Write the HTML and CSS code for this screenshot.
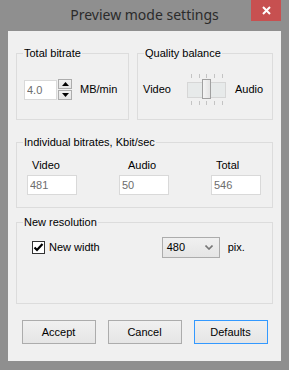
FILE: index.html
```html
<!DOCTYPE html>
<html lang="en">
<head>
    <meta charset="UTF-8">
    <title>Preview mode settings</title>
    <link rel="stylesheet" href="styles.css">
</head>
<body>

<div class="window">
    <!-- Title bar -->
    <div class="titlebar">
        <span class="title">Preview mode settings</span>
        <div class="close-btn">
            <svg width="9" height="9" viewBox="0 0 9 9">
                <path d="M1 1 L8 8 M8 1 L1 8" stroke="#fff" stroke-width="2"/>
            </svg>
        </div>
    </div>

    <div class="client">
        <div class="row">
            <!-- Total bitrate -->
            <fieldset class="group group-bitrate">
                <legend>Total bitrate</legend>
                <div class="spin-row">
                    <input class="field field-spin" type="text" value="4.0" disabled>
                    <div class="spin">
                        <div class="spin-btn">
                            <svg width="7" height="4" viewBox="0 0 7 4"><path d="M0 4 L3.5 0 L7 4 Z" fill="#000"/></svg>
                        </div>
                        <div class="spin-btn">
                            <svg width="7" height="4" viewBox="0 0 7 4"><path d="M0 0 L3.5 4 L7 0 Z" fill="#000"/></svg>
                        </div>
                    </div>
                    <span class="unit">MB/min</span>
                </div>
            </fieldset>

            <!-- Quality balance -->
            <fieldset class="group group-balance">
                <legend>Quality balance</legend>
                <div class="balance-row">
                    <span>Video</span>
                    <div class="trackbar">
                        <div class="ticks">
                            <i></i><i></i><i></i><i></i><i></i>
                        </div>
                        <div class="track"></div>
                        <div class="ticks">
                            <i></i><i></i><i></i><i></i><i></i>
                        </div>
                        <div class="thumb"></div>
                    </div>
                    <span class="audio-label">Audio</span>
                </div>
            </fieldset>
        </div>

        <!-- Individual bitrates -->
        <fieldset class="group group-rates">
            <legend>Individual bitrates, Kbit/sec</legend>
            <div class="rates">
                <div class="rate">
                    <label>Video</label>
                    <input class="field field-rate" type="text" value="481" disabled>
                </div>
                <div class="rate rate-audio">
                    <label>Audio</label>
                    <input class="field field-rate" type="text" value="50" disabled>
                </div>
                <div class="rate">
                    <label>Total</label>
                    <input class="field field-rate" type="text" value="546" disabled>
                </div>
            </div>
        </fieldset>

        <!-- New resolution -->
        <fieldset class="group group-resolution">
            <legend>New resolution</legend>
            <div class="res-row">
                <span class="checkbox">
                    <svg width="11" height="11" viewBox="0 0 11 11">
                        <path d="M1.5 5.5 L4 8 L9.5 2" stroke="#000" stroke-width="2.2" fill="none"/>
                    </svg>
                </span>
                <span class="check-label">New width</span>
                <div class="combo">
                    <span>480</span>
                    <svg width="8" height="5" viewBox="0 0 8 5">
                        <path d="M0.5 0.5 L4 4 L7.5 0.5" stroke="#777" stroke-width="1.6" fill="none"/>
                    </svg>
                </div>
                <span class="unit">pix.</span>
            </div>
        </fieldset>

        <!-- Buttons -->
        <div class="buttons">
            <button type="button">Accept</button>
            <button type="button">Cancel</button>
            <button type="button" class="default">Defaults</button>
        </div>
    </div>
</div>

</body>
</html>
```
FILE: styles.css
```css
/* Basic Reset */
* {
    box-sizing: border-box;
    margin: 0;
    padding: 0;
}

body {
    font-family: "Liberation Sans", Arial, sans-serif;
    font-size: 11px;
    line-height: 13px;
    color: #000;
}

/* Window frame */
.window {
    width: 289px;
    height: 370px;
    background-color: #8f8f8f;
    display: flex;
    flex-direction: column;
}

.titlebar {
    height: 31px;
    position: relative;
    text-align: center;
}

.title {
    display: block;
    padding-top: 5px;
    font-family: "Noto Sans", sans-serif;
    font-size: 14px;
    line-height: 20px;
    color: #2b2b2b;
}

.close-btn {
    position: absolute;
    top: 0;
    right: 8px;
    width: 30px;
    height: 21px;
    background-color: #c75050;
    display: flex;
    align-items: center;
    justify-content: center;
}

/* Client area */
.client {
    flex: 1;
    margin: 0 8px 9px;
    background-color: #f0f0f0;
    padding: 16px 8px 0;
}

.row {
    display: flex;
    gap: 8px;
}

/* Group boxes */
.group {
    border: 1px solid #dcdcdc;
    padding: 0 6px;
    min-width: 0;
}

.group legend {
    padding: 0 1px;
    line-height: 13px;
}

.group-bitrate {
    width: 113px;
    height: 73px;
}

.group-balance {
    width: 136px;
    height: 73px;
}

.group-rates {
    margin-top: 16px;
    height: 72px;
}

.group-resolution {
    margin-top: 8px;
    height: 88px;
}

/* Text fields */
.field {
    font-family: inherit;
    font-size: 11px;
    height: 20px;
    border: 1px solid #d9d9d9;
    background-color: #fff;
    color: #6d6d6d;
    padding: 0 2px;
    outline: none;
}

/* Total bitrate */
.spin-row {
    display: flex;
    align-items: center;
    margin-top: 19px;
    margin-left: 1px;
}

.field-spin {
    width: 33px;
}

.spin {
    display: flex;
    flex-direction: column;
    gap: 1px;
    margin-left: 1px;
}

.spin-btn {
    width: 14px;
    height: 10px;
    border: 1px solid #acacac;
    background: linear-gradient(#f0f0f0, #e5e5e5);
    display: flex;
    align-items: center;
    justify-content: center;
}

.unit {
    margin-left: 8px;
}

/* Quality balance */
.balance-row {
    display: flex;
    align-items: center;
    margin-top: 14px;
    margin-left: -1px;
}

.trackbar {
    position: relative;
    width: 39px;
    height: 31px;
    margin-left: 16px;
    display: flex;
    flex-direction: column;
    justify-content: space-between;
}

.ticks {
    display: flex;
    justify-content: space-between;
    padding: 0 3px 0 4px;
    height: 4px;
}

.ticks i {
    width: 1px;
    height: 4px;
    background-color: #c4c4c4;
}

.track {
    height: 16px;
    border: 1px solid #d6d6d6;
    background-color: #e7eaea;
}

.thumb {
    position: absolute;
    left: 15px;
    top: 5px;
    width: 9px;
    height: 20px;
    border: 1px solid #a0a0a0;
    background: linear-gradient(to right, #f4f4f4, #e4e4e4);
}

.audio-label {
    margin-left: 9px;
}

/* Individual bitrates */
.rates {
    display: flex;
    gap: 42px;
    margin-top: 10px;
    margin-left: 4px;
}

.rate {
    display: flex;
    flex-direction: column;
    gap: 3px;
}

.rate label {
    padding-left: 5px;
}

.rate-audio label {
    padding-left: 9px;
}

.field-rate {
    width: 50px;
}

/* New resolution */
.res-row {
    display: flex;
    align-items: center;
    margin-top: 8px;
    margin-left: 9px;
}

.checkbox {
    width: 13px;
    height: 13px;
    border: 1px solid #333;
    background-color: #fff;
    display: flex;
    align-items: center;
    justify-content: center;
}

.check-label {
    margin-left: 4px;
}

.combo {
    width: 58px;
    height: 21px;
    margin-left: 62px;
    border: 1px solid #acacac;
    background: linear-gradient(#f0f0f0, #e5e5e5);
    display: flex;
    align-items: center;
    justify-content: space-between;
    padding: 0 6px 0 4px;
}

/* Buttons */
.buttons {
    display: flex;
    justify-content: center;
    gap: 12px;
    margin-top: 16px;
}

.buttons button {
    width: 74px;
    height: 24px;
    font-family: inherit;
    font-size: 11px;
    color: #000;
    border: 1px solid #acacac;
    background: linear-gradient(#f0f0f0, #e5e5e5);
}

.buttons button.default {
    border-color: #3399ff;
}
```
